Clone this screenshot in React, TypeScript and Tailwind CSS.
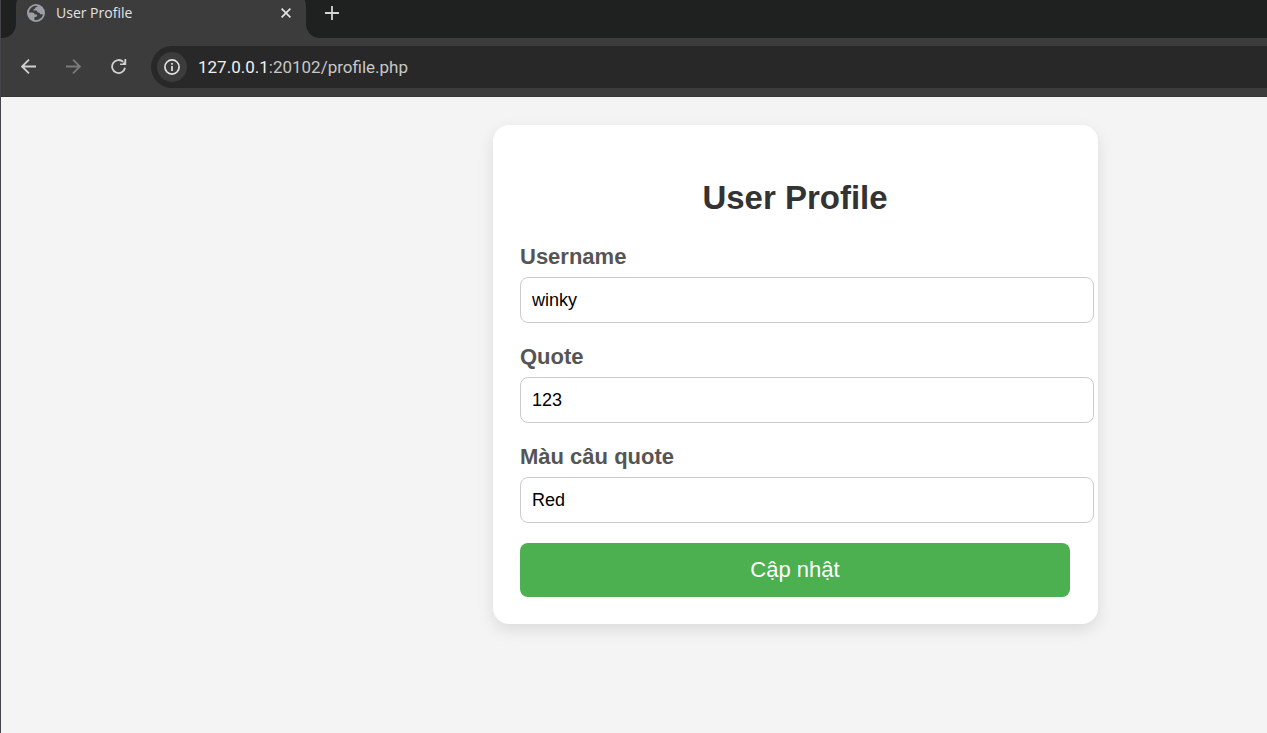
import { useState } from "react";

const fields = [
  { id: "username", label: "Username", initial: "winky" },
  { id: "quote", label: "Quote", initial: "123" },
  { id: "color", label: "Màu câu quote", initial: "Red" },
];

function Globe() {
  return (
    <svg viewBox="0 0 18 18" className="size-[18px] shrink-0" aria-hidden="true">
      <circle cx="9" cy="9" r="8.1" fill="#3c3c3c" stroke="#9aa0a6" strokeWidth="1.8" />
      <path
        d="M1 8.6 L5.2 8.6 Q7.6 8.7 7.7 10.4 L10 10.5 Q10.5 12.6 8.6 12.9 L7.4 13.1 L7.3 16.9 Q2 15.8 1 8.6Z"
        fill="#9aa0a6"
      />
      <path
        d="M10.6 1.2 L10.3 2.8 Q8.1 3 7.9 4.8 Q6.2 5 6.3 6.4 L9.6 6.6 Q10.3 8.9 12.4 8.8 L13.3 10.2 L16.8 10.4 Q17.8 3.4 10.6 1.2Z"
        fill="#9aa0a6"
      />
    </svg>
  );
}

function TabStrip() {
  return (
    <div className="flex h-[38px] overflow-hidden bg-[#3c3c3c]">
      <div className="w-[15px] shrink-0 rounded-br-[14px] bg-[#1f2120]" />
      <div className="w-[290px] shrink-0 bg-[linear-gradient(#1f2120_8px,transparent_8px)]">
        <div className="-mt-2 flex h-[46px] items-center rounded-t-[14px] bg-[#3c3c3c] pr-[11px] pb-1 pl-[11px]">
          <div className="flex min-w-0 flex-1 items-center gap-[11px]">
            <Globe />
            <span className="flex-1 truncate text-[14px] leading-[22px] text-[#e3e3e3]">User Profile</span>
            <button type="button" aria-label="Close tab" className="flex size-[18px] items-center justify-center">
              <svg viewBox="0 0 10 10" className="size-[10px]" fill="none" stroke="#e3e3e3" strokeWidth="1.7">
                <path d="M.6.6l8.8 8.8M9.4.6L.6 9.4" />
              </svg>
            </button>
          </div>
        </div>
      </div>
      <div className="flex-1 rounded-bl-[14px] bg-[#1f2120] pl-[18px] pt-[5px]">
        <button type="button" aria-label="New tab" className="flex size-4 items-center justify-center">
          <svg viewBox="0 0 14 14" className="size-[14px]" fill="none" stroke="#d4d4d4" strokeWidth="1.8">
            <path d="M7 0v14M0 7h14" />
          </svg>
        </button>
      </div>
    </div>
  );
}

function Toolbar() {
  return (
    <div className="flex h-[59px] items-start border-b border-[#353535] bg-[#3c3c3c] pt-2">
      <div className="flex h-[42px] w-[150px] shrink-0 items-center gap-[29px] pl-5">
        <button type="button" aria-label="Back">
          <svg viewBox="0 0 16 16" className="size-4" fill="none" stroke="#d0d0d0" strokeWidth="1.8">
            <path d="M15 7.5H1.2M8 .6L1.1 7.5l6.9 6.9" />
          </svg>
        </button>
        <button type="button" aria-label="Forward">
          <svg viewBox="0 0 16 16" className="size-4" fill="none" stroke="#7a7a7a" strokeWidth="1.8">
            <path d="M0 7.5h13.8M7 .6l6.9 6.9L7 14.4" />
          </svg>
        </button>
        <button type="button" aria-label="Reload">
          <svg viewBox="0 0 16 16" className="size-4" fill="none" stroke="#d0d0d0" strokeWidth="1.8">
            <path d="M14 8.8A6.5 6.5 0 1 1 12.2 2.9" />
            <path d="M15.2.1v6H9v-1.7h2.8L13.4 2.6V.1z" fill="#d0d0d0" stroke="none" />
          </svg>
        </button>
      </div>
      <div className="flex h-[42px] min-w-0 flex-1 items-center gap-[11px] rounded-l-full bg-[#282828] pl-[6px]">
        <button
          type="button"
          aria-label="View site information"
          className="flex size-[30px] shrink-0 items-center justify-center rounded-full bg-[#3c3c3c]"
        >
          <svg viewBox="0 0 16 16" className="size-4" fill="none" stroke="#e3e3e3">
            <circle cx="8" cy="8" r="7.1" strokeWidth="1.7" />
            <path d="M8 7v5M8 4v1.7" strokeWidth="1.7" />
          </svg>
        </button>
        <p className="font-[Roboto,sans-serif] text-[17px] leading-6 text-[#c7c7c7]">
          <span className="text-[#f0f0f0]">127.0.0.1</span>:20102/profile.php
        </p>
      </div>
    </div>
  );
}

function ProfileCard() {
  const [values, setValues] = useState(fields.map((f) => f.initial));
  return (
    <form
      onSubmit={(e) => e.preventDefault()}
      className="w-[605px] shrink-0 rounded-[16px] bg-white py-[27px] pr-7 pl-[27px] shadow-[0_6px_16px_rgba(0,0,0,0.1)]"
    >
      <h1 className="mt-[27px] mb-[26px] text-center text-[33px] leading-[38px] font-bold text-[#333]">
        User Profile
      </h1>
      <div className="flex flex-col gap-5">
        {fields.map((f, i) => (
          <div key={f.id} className="flex flex-col gap-[6px]">
            <label htmlFor={f.id} className="text-[22px] leading-[28px] font-bold text-[#555]">
              {f.label}
            </label>
            <input
              id={f.id}
              type="text"
              value={values[i]}
              onChange={(e) => setValues(values.map((v, j) => (j === i ? e.target.value : v)))}
              className="h-[46px] w-[calc(100%+24px)] rounded-[8px] border border-[#ccc] bg-white px-[11px] text-[18px] text-black"
            />
          </div>
        ))}
        <button type="submit" className="h-[54px] w-full rounded-[8px] bg-[#4caf50] pb-px text-[22px] text-white">
          Cập nhật
        </button>
      </div>
    </form>
  );
}

export default function App() {
  return (
    <div className="flex min-h-screen flex-col overflow-hidden border-l border-[#46434a] bg-[#f4f4f4]">
      <header className="font-['Open_Sans',sans-serif]">
        <TabStrip />
        <Toolbar />
      </header>
      <main className="flex flex-1 items-start justify-center pt-7 pb-7 pl-[323px] font-['Liberation_Sans',Arial,sans-serif]">
        <ProfileCard />
      </main>
    </div>
  );
}
